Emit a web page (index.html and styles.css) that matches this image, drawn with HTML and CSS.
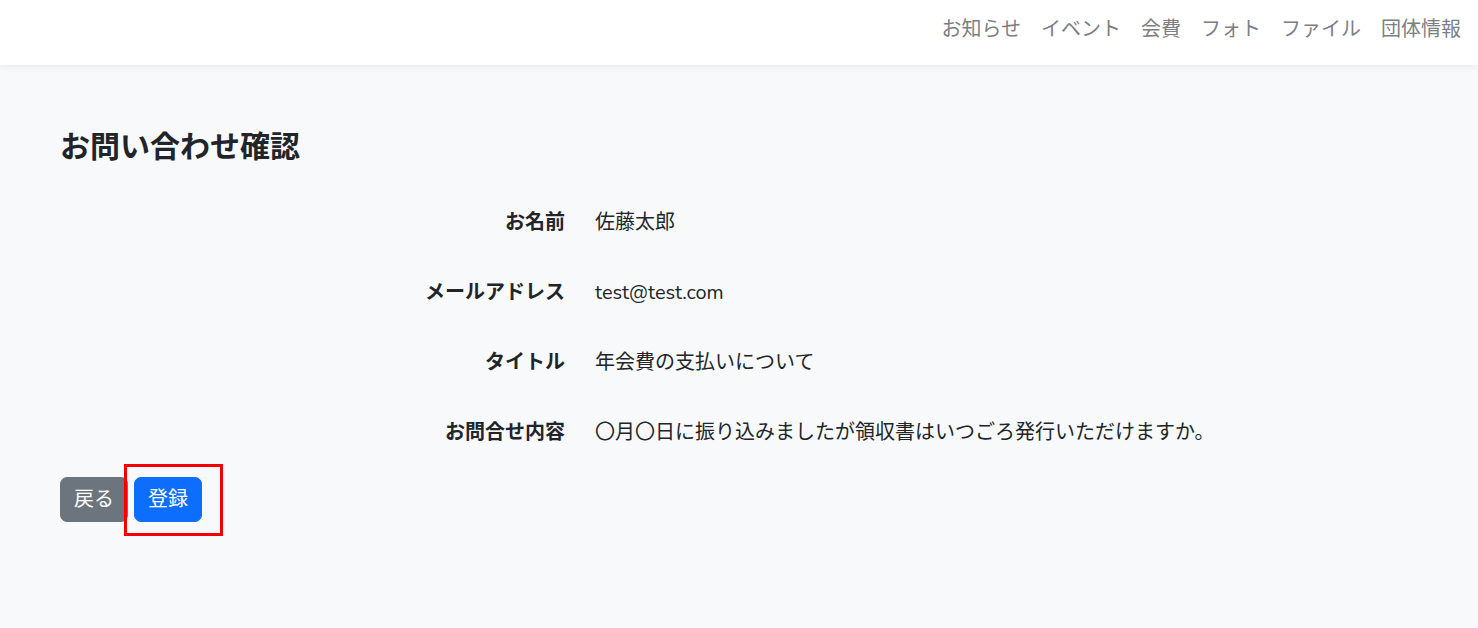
FILE: index.html
```html
<!DOCTYPE html>
<html lang="ja">
<head>
    <meta charset="UTF-8">
    <meta name="viewport" content="width=device-width, initial-scale=1.0">
    <title>お問い合わせ確認</title>
    <link rel="stylesheet" href="styles.css">
</head>
<body>
    <header class="navbar">
        <nav class="nav">
            <a href="#">お知らせ</a>
            <a href="#">イベント</a>
            <a href="#">会費</a>
            <a href="#">フォト</a>
            <a href="#">ファイル</a>
            <a href="#">団体情報</a>
        </nav>
    </header>

    <main class="container">
        <h1 class="title">お問い合わせ確認</h1>

        <dl class="confirm">
            <dt>お名前</dt>
            <dd>佐藤太郎</dd>
            <dt>メールアドレス</dt>
            <dd>test@test.com</dd>
            <dt>タイトル</dt>
            <dd>年会費の支払いについて</dd>
            <dt>お問合せ内容</dt>
            <dd>〇月〇日に振り込みましたが領収書はいつごろ発行いただけますか。</dd>
        </dl>

        <div class="actions">
            <button class="btn btn-secondary" type="button">戻る</button>
            <div class="marked">
                <button class="btn btn-primary" type="submit">登録</button>
                <span class="mark-box"></span>
            </div>
        </div>
    </main>
</body>
</html>
```

FILE: styles.css
```css
body {
    margin: 0;
    background: #f8f9fa;
    color: #212529;
    font-family: 'Nunito', 'Lato', 'Noto Sans CJK JP', sans-serif;
    font-size: 20px;
    line-height: 1.5;
}
.navbar {
    height: 65px;
    background: #fff;
    box-shadow: 0 2px 6px rgba(0, 0, 0, 0.06);
    display: flex;
    justify-content: flex-end;
    align-items: center;
}
.nav {
    display: flex;
    gap: 20px;
    padding-right: 17px;
    margin-top: -5px;
}
.nav a {
    color: #7b7f84;
    text-decoration: none;
    font-size: 20px;
}
.container {
    padding: 0 60px 60px;
}
.title {
    margin: 0;
    padding-top: 62px;
    font-size: 30px;
    font-weight: 700;
    line-height: 1.4;
}
.confirm {
    display: grid;
    grid-template-columns: 505px 1fr;
    column-gap: 30px;
    row-gap: 40px;
    margin: 39px 0 0;
}
.confirm dt {
    text-align: right;
    font-weight: 700;
}
.confirm dd {
    margin: 0;
}
.actions {
    display: flex;
    align-items: flex-start;
    gap: 6px;
    margin-top: 29px;
}
.btn {
    display: block;
    font-family: inherit;
    font-size: 20px;
    line-height: 1.5;
    color: #fff;
    border: 1px solid transparent;
    border-radius: 7px;
    padding: 6.5px 13px;
    white-space: nowrap;
    cursor: pointer;
}
.btn-secondary {
    background: #6c757d;
    border-color: #6c757d;
}
.btn-primary {
    background: #0d6efd;
    border-color: #0d6efd;
}
.marked {
    position: relative;
}
.mark-box {
    position: absolute;
    top: -13px;
    bottom: -14px;
    left: -10px;
    right: -21px;
    border: 3px solid #f40000;
    pointer-events: none;
}
```
